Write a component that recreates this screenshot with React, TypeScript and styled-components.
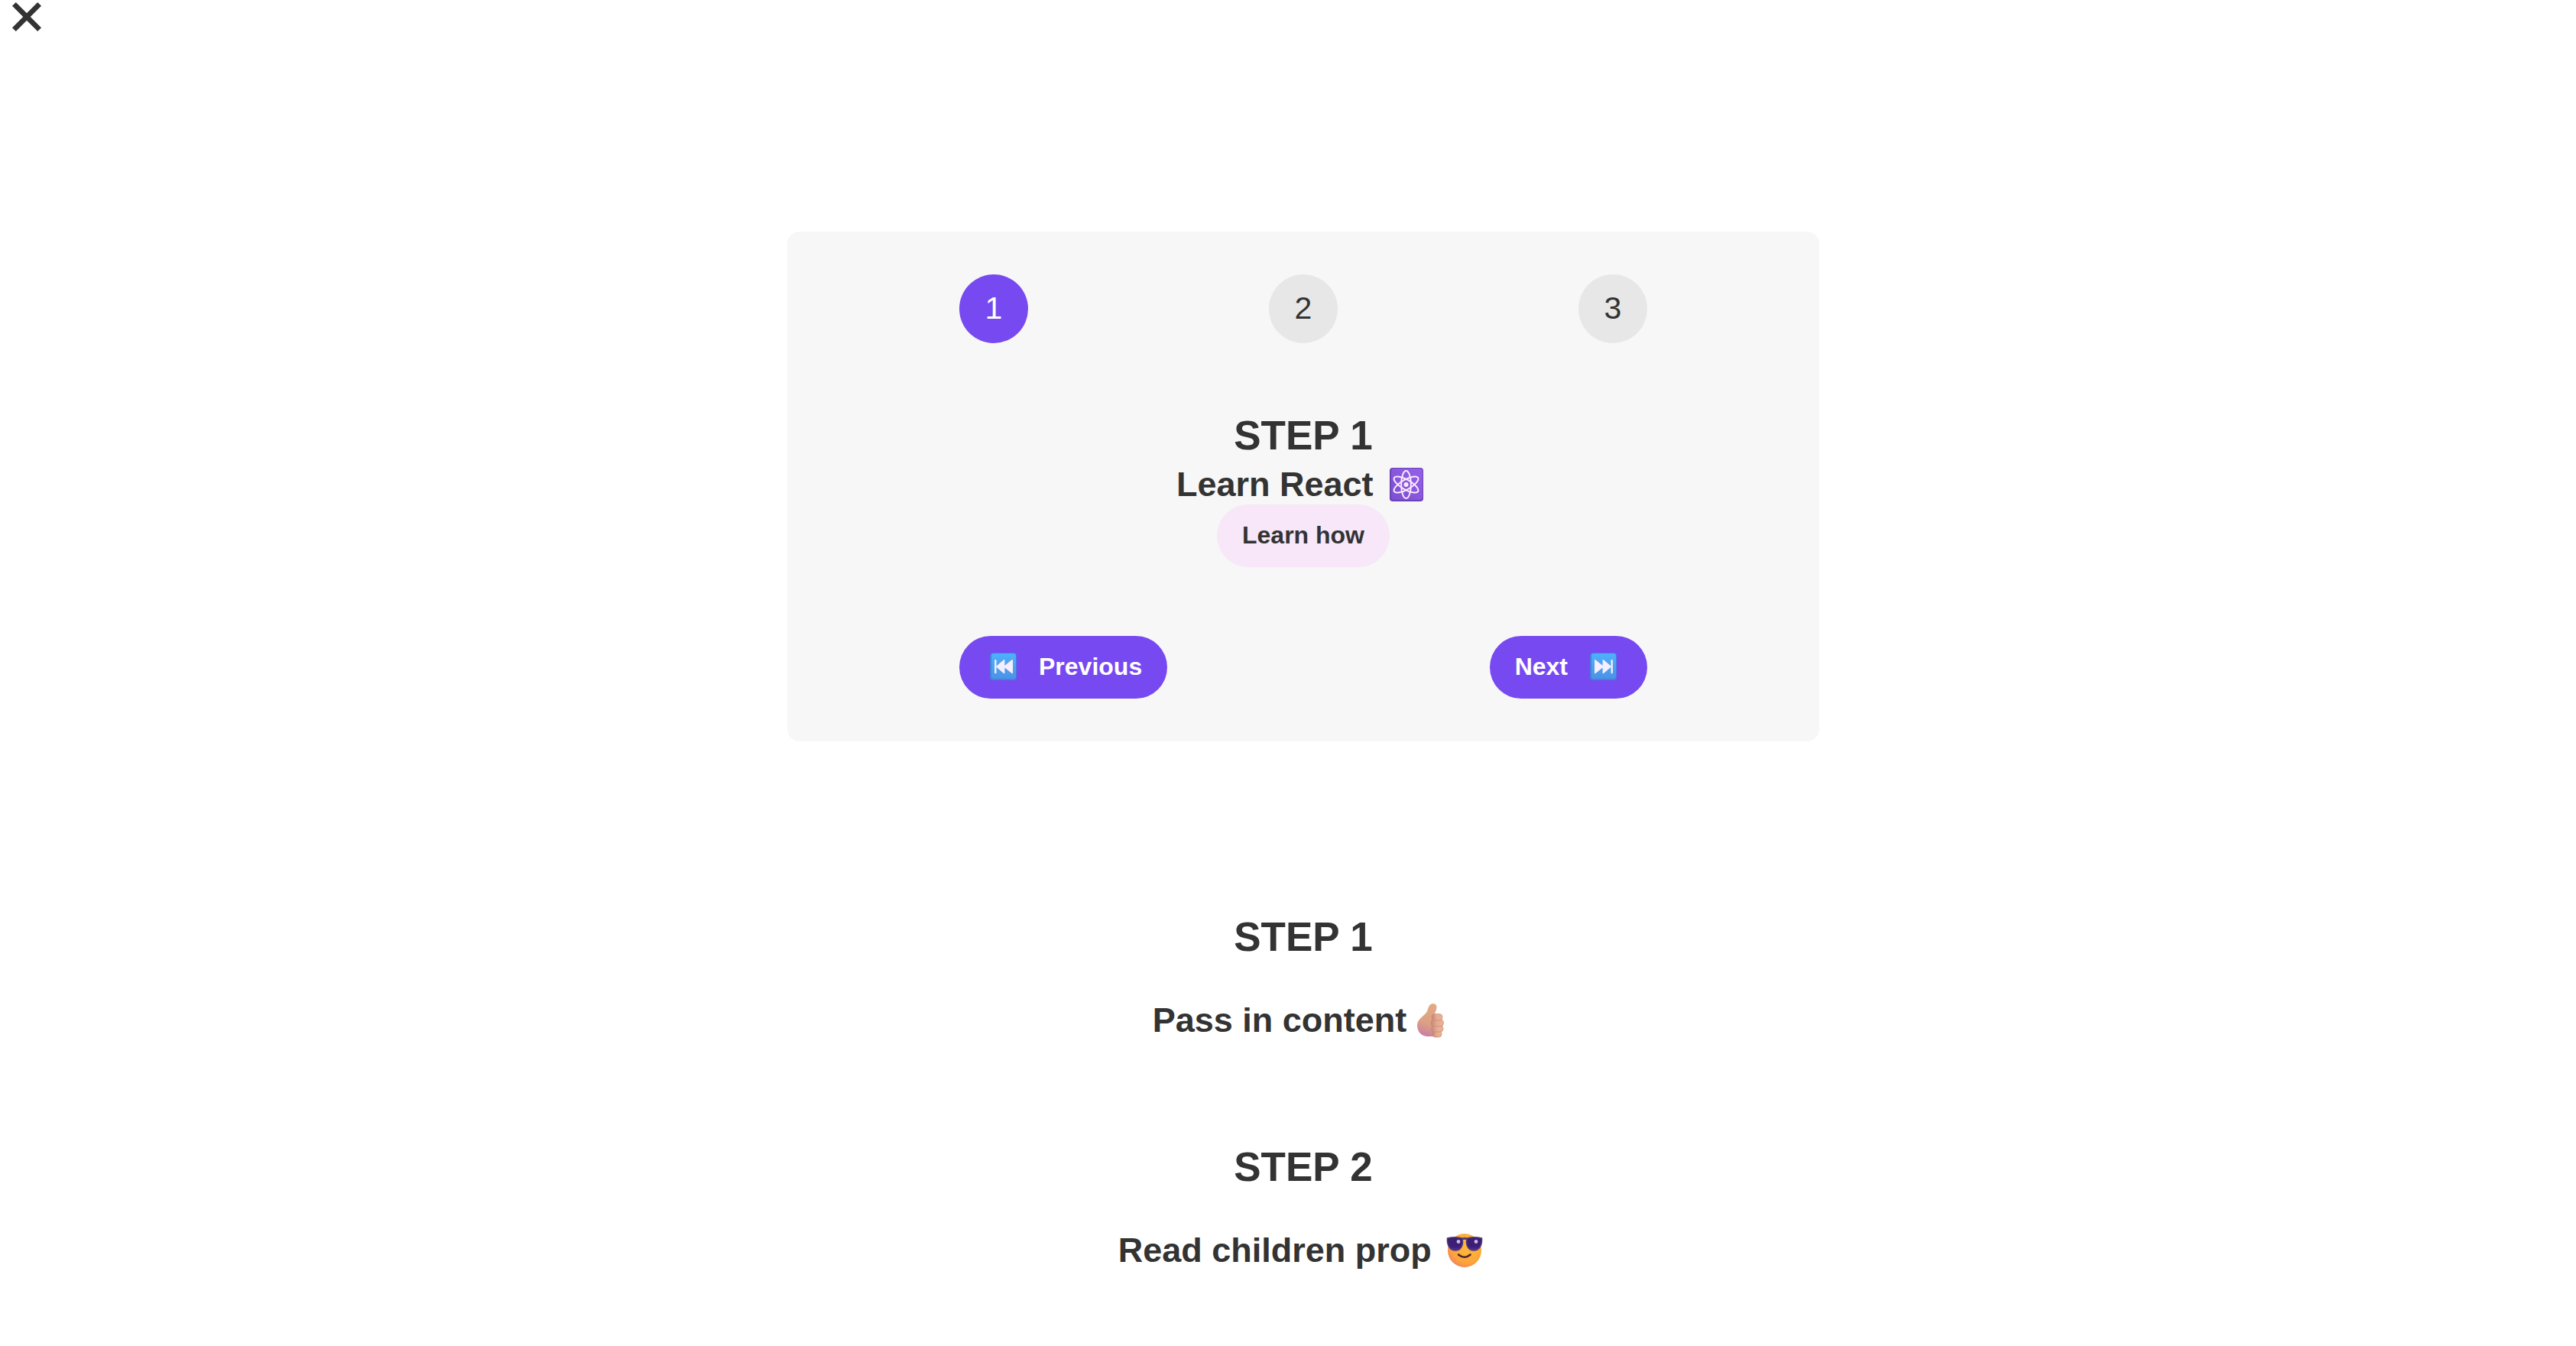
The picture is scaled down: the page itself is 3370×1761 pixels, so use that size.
import React, { useState } from "react";
import styled, { createGlobalStyle } from "styled-components";

const GlobalStyle = createGlobalStyle`
  * { box-sizing: border-box; }
  body {
    margin: 0;
    background: #fff;
    color: #333;
    font-family: "Liberation Sans", Arial, Helvetica, sans-serif;
  }
  button { font-family: inherit; cursor: pointer; border: none; }
  h3, p { margin: 0; }
`;

const Page = styled.div`
  display: flex;
  flex-direction: column;
`;

const CloseButton = styled.button`
  align-self: flex-start;
  display: flex;
  align-items: flex-start;
  height: 78px;
  padding: 3px 16px;
  background: none;
  color: inherit;
`;

const Main = styled.main`
  display: flex;
  flex-direction: column;
  align-items: center;
  gap: 225px;
  padding: 225px 0 0 40px;
`;

const Card = styled.section`
  display: flex;
  flex-direction: column;
  gap: 90px;
  width: 100%;
  max-width: 1350px;
  padding: 56px 225px;
  border-radius: 16px;
  background: #f7f7f7;
`;

const Row = styled.div`
  display: flex;
  justify-content: space-between;
`;

const StepNumber = styled.div<{ $active: boolean }>`
  display: flex;
  align-items: center;
  justify-content: center;
  width: 90px;
  height: 90px;
  padding-bottom: 2px;
  border-radius: 50%;
  font-size: 41px;
  background: ${(p) => (p.$active ? "#7749f0" : "#e7e7e7")};
  color: ${(p) => (p.$active ? "#fff" : "inherit")};
`;

const Message = styled.div<{ $gap: number }>`
  display: flex;
  flex-direction: column;
  align-items: center;
  gap: ${(p) => p.$gap}px;
`;

const Title = styled.h3`
  font-size: 53px;
  line-height: 62px;
`;

const Text = styled.p`
  display: flex;
  align-items: center;
  padding-top: 7px;
  font-size: 45px;
  font-weight: bold;
  line-height: 52px;
  white-space: pre;
`;

const StepList = styled.div`
  display: flex;
  flex-direction: column;
  gap: 135px;
`;

const PillButton = styled.button<{ $bg: string; $color: string }>`
  display: flex;
  align-items: center;
  gap: 22px;
  height: 82px;
  padding: 0 33px 2px;
  border-radius: 41px;
  background: ${(p) => p.$bg};
  color: ${(p) => p.$color};
  font-size: 32px;
  font-weight: bold;
`;

const Emoji = styled.span<{ $size: number }>`
  display: flex;
  justify-content: center;
  width: ${(p) => p.$size}px;
  svg { display: block; }
`;

const CloseIcon = () => (
  <svg width="38" height="38" viewBox="0 0 38 38" aria-hidden="true">
    <path d="M2.400 2.400L35.600 35.600M35.600 2.400L2.400 35.600" stroke="currentColor" strokeWidth="6.800" />
  </svg>
);

const AtomIcon = () => (
  <Emoji $size={62}>
    <svg width="44" height="44" viewBox="0 0 44 44" aria-hidden="true">
      <defs>
        <linearGradient id="atomBg" x1="0" y1="1" x2="1" y2="0">
          <stop offset="0" stopColor="#7c4fd0" />
          <stop offset="1" stopColor="#9560ea" />
        </linearGradient>
      </defs>
      <rect width="44" height="44" rx="4" fill="#6b42b8" />
      <rect x="2" y="1" width="41" height="41" rx="4" fill="url(#atomBg)" />
      <g fill="none" stroke="#fbeaff" strokeWidth="2">
        <ellipse cx="21.5" cy="22" rx="6.4" ry="18" />
        <ellipse cx="21.5" cy="22" rx="6.4" ry="18" transform="rotate(60 21.5 22)" />
        <ellipse cx="21.5" cy="22" rx="6.4" ry="18" transform="rotate(120 21.5 22)" />
      </g>
      <circle cx="21.5" cy="22" r="3" fill="#fbeaff" />
    </svg>
  </Emoji>
);

const SkipIcon = ({ back = false }: { back?: boolean }) => {
  const id = back ? "skipBack" : "skipNext";
  return (
    <Emoji $size={49}>
      <svg width="35" height="36" viewBox="0 0 35 36" aria-hidden="true">
        <defs>
          <linearGradient id={id} x1="0" y1="0" x2="0" y2="1">
            <stop offset="0" stopColor="#4fb0fb" />
            <stop offset="1" stopColor="#4a93e6" />
          </linearGradient>
        </defs>
        <rect width="35" height="36" rx="4" fill="#4580dd" />
        <rect x="2" y="1" width="32" height="33" rx="3" fill={`url(#${id})`} />
        <g
          fill="#f6eeff"
          stroke="#f6eeff"
          strokeWidth="1.6"
          strokeLinejoin="round"
          transform={back ? undefined : "translate(36 0) scale(-1 1)"}
        >
          <path d="M7.3 10.2V26" strokeWidth="2.4" strokeLinecap="round" />
          <path d="M18.6 9.8V26.4L9 18.1ZM29.2 9.8V26.4L19 18.1Z" />
        </g>
      </svg>
    </Emoji>
  );
};

const ThumbIcon = () => (
  <Emoji $size={62}>
    <svg width="36" height="46" viewBox="0 0 36 46" aria-hidden="true">
      <defs>
        <linearGradient id="thumbSkin" x1="0.6" y1="0" x2="0.4" y2="1">
          <stop offset="0" stopColor="#e3aa85" />
          <stop offset="0.6" stopColor="#dca083" />
          <stop offset="1" stopColor="#c77fa4" />
        </linearGradient>
        <linearGradient id="fingerSkin" x1="0" y1="0" x2="1" y2="0">
          <stop offset="0" stopColor="#ca8578" />
          <stop offset="0.5" stopColor="#e6ac91" />
          <stop offset="1" stopColor="#e9b393" />
        </linearGradient>
      </defs>
      <path
        d="M17 3.5C19 0 25 0 26.300 4C27.300 8 24.500 13 22.500 17L24 44H14C6 43.500 1 37 1 29.500C1 20.500 11 17.500 14 11C15 8.500 15.500 6 17 3.500Z"
        fill="url(#thumbSkin)"
      />
      <g fill="url(#fingerSkin)" stroke="#c38376" strokeWidth="0.6">
        <rect x="21" y="36.500" width="12" height="8.500" rx="4" />
        <rect x="19.500" y="29.500" width="15.500" height="8.500" rx="4" />
        <rect x="19" y="22" width="16.500" height="8.500" rx="4" />
        <rect x="20" y="14.500" width="14" height="8.500" rx="4" />
      </g>
    </svg>
  </Emoji>
);

const SunglassesIcon = () => (
  <Emoji $size={62}>
    <svg width="48" height="46" viewBox="0 0 48 46" aria-hidden="true">
      <defs>
        <radialGradient id="face" cx="0.62" cy="0.35" r="0.75">
          <stop offset="0" stopColor="#ffbd3b" />
          <stop offset="0.7" stopColor="#fba43a" />
          <stop offset="1" stopColor="#f07a6a" />
        </radialGradient>
        <linearGradient id="lens" x1="0" y1="0" x2="0" y2="1">
          <stop offset="0" stopColor="#3b206e" />
          <stop offset="0.7" stopColor="#3c1d78" />
          <stop offset="1" stopColor="#593298" />
        </linearGradient>
      </defs>
      <circle cx="24" cy="23" r="22" fill="url(#face)" />
      <path d="M16 28.500Q24 35 31.500 28.500" fill="none" stroke="#4b2432" strokeWidth="2.600" strokeLinecap="round" />
      <g fill="url(#lens)" stroke="#52397c" strokeWidth="1.600" strokeLinejoin="round">
        <path d="M1.500 7C7 5.500 15 5.500 20.500 7C23 13 20.500 23 12.500 23C5 23 1 17 1.500 7Z" />
        <path d="M46.500 7C41 5.500 33 5.500 27.500 7C25 13 27.500 23 35.500 23C43 23 47 17 46.500 7Z" />
      </g>
      <path d="M20 8.500Q24 6 28 8.500" fill="none" stroke="#52397c" strokeWidth="3" />
      <circle cx="16" cy="11.500" r="2.400" fill="#c9b8ea" />
      <circle cx="39" cy="11.500" r="2.400" fill="#c9b8ea" />
    </svg>
  </Emoji>
);

const messages = ["Learn React ", "Apply for jobs ", "Invest your new income "];

export default function App() {
  const [step, setStep] = useState(1);
  const [open, setOpen] = useState(true);

  return (
    <>
      <GlobalStyle />
      <Page>
        <CloseButton aria-label="Close" onClick={() => setOpen(!open)}>
          <CloseIcon />
        </CloseButton>
        <Main>
          {open && (
            <Card>
              <Row>
                {[1, 2, 3].map((n) => (
                  <StepNumber key={n} $active={step >= n}>
                    {n}
                  </StepNumber>
                ))}
              </Row>
              <Message $gap={0}>
                <Title>STEP {step}</Title>
                <Text>
                  {messages[step - 1]}
                  <AtomIcon />
                </Text>
                <PillButton $bg="#f7e7f8" $color="#333">
                  Learn how
                </PillButton>
              </Message>
              <Row>
                <PillButton $bg="#7749f0" $color="#fff" onClick={() => setStep(Math.max(1, step - 1))}>
                  <SkipIcon back />
                  Previous
                </PillButton>
                <PillButton $bg="#7749f0" $color="#fff" onClick={() => setStep(Math.min(3, step + 1))}>
                  Next
                  <SkipIcon />
                </PillButton>
              </Row>
            </Card>
          )}
          <StepList>
            <Message $gap={45}>
              <Title>STEP 1</Title>
              <Text>
                Pass in content
                <ThumbIcon />
              </Text>
            </Message>
            <Message $gap={45}>
              <Title>STEP 2</Title>
              <Text>
                {"Read children prop "}
                <SunglassesIcon />
              </Text>
            </Message>
          </StepList>
        </Main>
      </Page>
    </>
  );
}
